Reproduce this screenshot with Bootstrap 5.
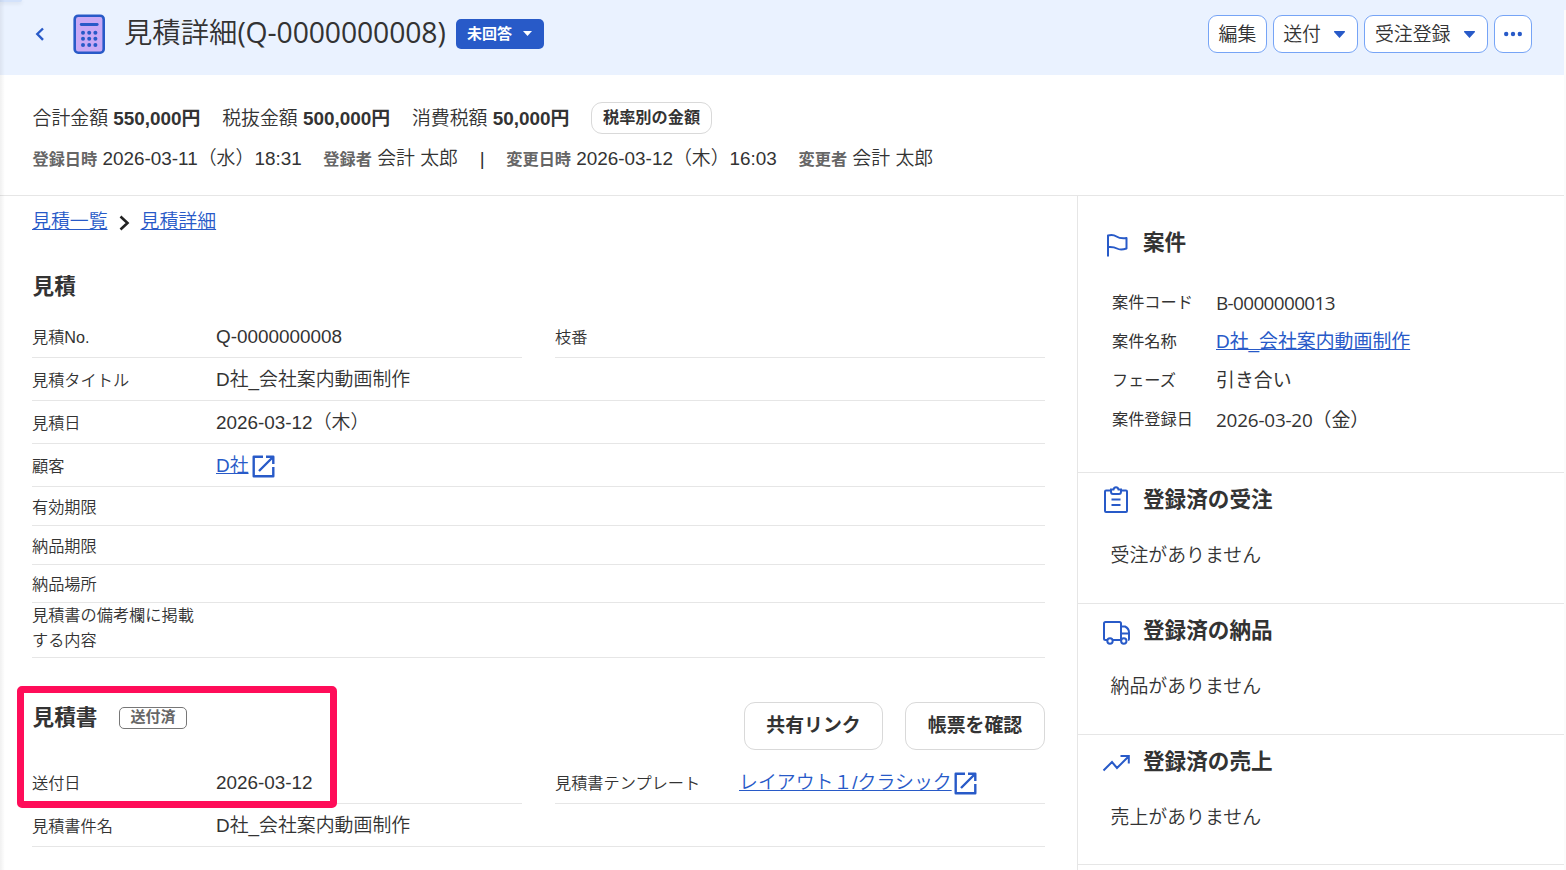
<!DOCTYPE html>
<html lang="ja">
<head>
<meta charset="utf-8">
<meta name="viewport" content="width=device-width, initial-scale=1">
<title>見積詳細</title>
<link href="https://cdn.jsdelivr.net/npm/bootstrap@5.3.0/dist/css/bootstrap.min.css" rel="stylesheet">
<style>
:root{--blue:#285ac8;--line:#e6e6e6}
body{font-family:"Liberation Sans","Noto Sans CJK JP",sans-serif;font-size:18.9px;line-height:28px;color:#333;font-weight:350;height:870px;overflow:hidden;background:linear-gradient(#eaf2ff 10px,#fbfbfb 10px)}
b{font-weight:700}
svg{display:block;flex:none}
.page{width:1564px;height:870px;background:#fff}
.page::before{content:"";position:absolute;left:0;top:0;width:5px;height:870px;background:linear-gradient(90deg,rgba(0,0,0,.06),transparent);z-index:3}
.tabend{position:absolute;left:0;top:0;width:22px;height:2px;background:#d3e2fb;box-shadow:0 1px 4px rgba(0,0,0,.12);border-radius:0 0 3px 0}
.topbar{height:75px;background:#eaf2ff;padding:0 32px 7px 34px}
.title{font-size:28.35px;line-height:40px;font-weight:350;margin:-3px 0 0 16px;width:332px}
.latin{font-family:"Open Sans","Noto Sans CJK JP",sans-serif;font-weight:400}
.title .latin{letter-spacing:-.12px}
.status{width:88px;height:30px;background:var(--blue);color:#fff;border-radius:5px;font-size:15px;font-weight:700;line-height:26px;padding:0 0 1px 10px;gap:11px}
.tool{height:38px;border:1px solid #76a4f6;border-radius:9px;background:#fff;color:#333;font-size:18.9px;font-weight:350;line-height:36px;padding:1px 9px 0 9.500px;gap:13px}
.tool.drop{padding-right:12.500px}
.summary{height:121px;padding:27px 32px 0 32.500px;border-bottom:1px solid var(--line)}
.sumrow{gap:21.700px;white-space:pre}
.sumrow.sums>span{padding-top:2px}
.meta{font-size:16.2px;color:#666}
.pillbtn{border:1px solid #d9d9d9;border-radius:11px;background:#fff;font-weight:700;color:#333;text-align:center}
.pillbtn.sm{font-size:16.2px;width:121px;height:32px;line-height:27px;padding:0 0 2px}
.pillbtn.lg{font-size:18.9px;height:48px;line-height:44px;padding:0}
a{color:var(--blue)}
a:hover{color:var(--blue)}
.left{width:1077px;padding:12px 32px 0}
h2.sec{font-size:21.6px;line-height:32px;font-weight:700;margin:0}
.left h2.sec{padding-left:.6px}
.field{border-bottom:1px solid var(--line);padding-top:2px}
.field .name{width:184px;font-size:16.2px;line-height:25px;flex:none}
.h43{height:43px}.h39{height:39px}.h38{height:38px}
.h55{height:55px;padding:0 0 5px}
.chip{width:68px;height:22px;border:1px solid #777;border-radius:5px;font-size:15px;line-height:18px;font-weight:700;color:#666;text-align:center}
.callout{position:absolute;left:17px;top:686px;width:320px;height:122px;border:7px solid #ff0d59;border-radius:5px;z-index:4}
.side{width:487px;height:680px;border-left:1px solid var(--line)}
.panel{border-bottom:1px solid var(--line);height:131px;padding:11px 24px 0 24px}
.panel h2.sec{margin-left:13px}
.panel p{margin:26px 0 0 8.500px}
.info{margin:23px 0 0 10px;font-weight:400}
.info .name{width:104px;font-size:16.2px;flex:none}
.info .val{padding-top:2px}
.info>div{height:39px}
.info .latin{letter-spacing:-.62px}
.info .date{letter-spacing:-.2px}
</style>
</head>
<body>
<div class="page position-relative">
<div class="tabend"></div>
<header class="topbar d-flex align-items-center">
  <svg width="12" height="16" viewBox="0 0 12 16" fill="none" stroke="#285ac8" stroke-width="2.4"><path d="M9 2.5 3.3 8 9 13.8"/></svg>
  <svg class="ms-4" width="38" height="42" viewBox="0 0 38 42"><rect x="4.7" y="2.7" width="29" height="37" rx="3.5" fill="#c9a9f5" stroke="#285ac8" stroke-width="2.600"/><path d="M11.2 11.500h16" stroke="#285ac8" stroke-width="2.800" stroke-linecap="round"/><g fill="#285ac8"><circle cx="13" cy="19.700" r="2"/><circle cx="19.200" cy="19.700" r="2"/><circle cx="25.400" cy="19.700" r="2"/><circle cx="13" cy="25.800" r="2"/><circle cx="19.200" cy="25.800" r="2"/><circle cx="25.400" cy="25.800" r="2"/><circle cx="13" cy="31.900" r="2"/><circle cx="19.200" cy="31.900" r="2"/><circle cx="25.400" cy="31.900" r="2"/></g></svg>
  <h1 class="title text-nowrap">見積詳細<span class="latin">(Q-0000000008)</span></h1>
  <button class="btn status d-flex align-items-center">未回答<svg width="9" height="5" viewBox="0 0 9 5"><path d="M0 0h9L4.500 5z" fill="#fff"/></svg></button>
  <div class="d-flex ms-auto" style="gap:6px">
    <button class="btn tool" style="width:59px">編集</button>
    <button class="btn tool drop d-flex align-items-center">送付<svg width="11" height="7" viewBox="0 0 11 7"><path d="M.5 0h10Q11.500.5 10.500 1.500L5.500 7 .5 1.500Q-.5.5.5 0z" fill="#285ac8"/></svg></button>
    <button class="btn tool drop d-flex align-items-center">受注登録<svg width="11" height="7" viewBox="0 0 11 7"><path d="M.5 0h10Q11.500.5 10.500 1.500L5.500 7 .5 1.500Q-.5.5.5 0z" fill="#285ac8"/></svg></button>
    <button class="btn tool d-flex align-items-center px-0 pt-0 justify-content-center" style="width:38px"><svg width="18" height="6" viewBox="0 0 18 6" fill="#285ac8"><circle cx="2.200" cy="3" r="2.200"/><circle cx="9" cy="3" r="2.200"/><circle cx="15.800" cy="3" r="2.200"/></svg></button>
  </div>
</header>
<section class="summary">
  <div class="sumrow sums d-flex align-items-center"><span>合計金額 <b>550,000円</b></span><span>税抜金額 <b>500,000円</b></span><span>消費税額 <b>50,000円</b></span><button class="pillbtn sm">税率別の金額</button></div>
  <div class="sumrow d-flex" style="margin-top:11px"><span><b class="meta">登録日時</b> 2026-03-11（水）18:31</span><span><b class="meta">登録者</b> 会計 太郎</span><span>|</span><span><b class="meta">変更日時</b> 2026-03-12（木）16:03</span><span><b class="meta">変更者</b> 会計 太郎</span></div>
</section>
<div class="d-flex">
<main class="left">
  <nav class="d-flex align-items-center"><a href="#">見積一覧</a><svg style="margin:2px 11px 0 11px" width="11" height="18" viewBox="0 0 11 18" fill="none" stroke="#222" stroke-width="2.600"><path d="m1.500 2.500 7 6.500-7 6.500"/></svg><a href="#">見積詳細</a></nav>
  <h2 class="sec" style="margin-top:35px">見積</h2>
  <div class="d-flex justify-content-between" style="margin-top:12px">
    <div class="field h43 d-flex align-items-center" style="width:490px"><span class="name">見積No.</span><span>Q-0000000008</span></div>
    <div class="field h43 d-flex align-items-center" style="width:490px"><span class="name">枝番</span></div>
  </div>
  <div class="field h43 d-flex align-items-center"><span class="name">見積タイトル</span><span>D社_会社案内動画制作</span></div>
  <div class="field h43 d-flex align-items-center"><span class="name">見積日</span><span>2026-03-12（木）</span></div>
  <div class="field h43 d-flex align-items-center"><span class="name">顧客</span><a href="#">D社</a><svg style="margin:1px 0 0 3px" width="23" height="23" viewBox="0 0 23 23" fill="none" stroke="#285ac8" stroke-width="2.400" stroke-linejoin="round"><path d="M11 1.700H1.700v19.600h19.600V12M14 1.700h7.300V9M21 2 7 16"/></svg></div>
  <div class="field h39 d-flex align-items-center"><span class="name">有効期限</span></div>
  <div class="field h39 d-flex align-items-center"><span class="name">納品期限</span></div>
  <div class="field h38 d-flex align-items-center"><span class="name">納品場所</span></div>
  <div class="field h55 d-flex align-items-center"><span class="name">見積書の備考欄に掲載<br>する内容</span></div>
  <div class="d-flex" style="margin-top:44px;height:59px">
    <h2 class="sec">見積書</h2><span class="chip" style="margin:5px 0 0 21.500px">送付済</span>
    <button class="pillbtn lg ms-auto" style="width:139px">共有リンク</button><button class="pillbtn lg" style="width:140px;margin-left:22px">帳票を確認</button>
  </div>
  <div class="d-flex justify-content-between">
    <div class="field h43 d-flex align-items-center" style="width:490px"><span class="name">送付日</span><span>2026-03-12</span></div>
    <div class="field h43 d-flex align-items-center" style="width:490px"><span class="name">見積書テンプレート</span><a href="#">レイアウト１/クラシック</a><svg style="margin:1px 0 0 2px" width="23" height="23" viewBox="0 0 23 23" fill="none" stroke="#285ac8" stroke-width="2.400" stroke-linejoin="round"><path d="M11 1.700H1.700v19.600h19.600V12M14 1.700h7.300V9M21 2 7 16"/></svg></div>
  </div>
  <div class="field h43 d-flex align-items-center"><span class="name">見積書件名</span><span>D社_会社案内動画制作</span></div>
</main>
<aside class="side">
  <section class="panel" style="height:277px;padding-top:31px">
    <div class="d-flex align-items-center"><svg class="mt-1" width="28" height="28" viewBox="0 0 28 28" fill="none" stroke="#285ac8" stroke-width="2" stroke-linejoin="round"><path d="M6 25.500V4.500Q11 3.200 14.500 5.500T24.500 7v10.500Q18.500 19.500 15 17.500T6 16"/></svg><h2 class="sec">案件</h2></div>
    <div class="info">
      <div class="d-flex align-items-center"><span class="name">案件コード</span><span class="latin val">B-0000000013</span></div>
      <div class="d-flex align-items-center"><span class="name">案件名称</span><a style="padding-top:2px" href="#">D社_会社案内動画制作</a></div>
      <div class="d-flex align-items-center"><span class="name">フェーズ</span><span style="padding-top:3px">引き合い</span></div>
      <div class="d-flex align-items-center"><span class="name">案件登録日</span><span style="padding-top:3px"><span class="latin date">2026-03-20</span>（金）</span></div>
    </div>
  </section>
  <section class="panel">
    <div class="d-flex align-items-center"><svg width="28" height="28" viewBox="0 0 28 28" fill="none" stroke="#285ac8" stroke-width="2"><path d="M9 4.500H4Q3 4.500 3 5.500V25q0 1 1 1h20q1 0 1-1V5.500q0-1-1-1h-5M9 3.500h2.500q.5-2.300 2.500-2.300t2.500 2.300H19v2Q19 8 17 8h-6Q9 8 9 5.500zM9.500 13.500h9M9.500 19h9"/></svg><h2 class="sec">登録済の受注</h2></div>
    <p>受注がありません</p>
  </section>
  <section class="panel">
    <div class="d-flex align-items-center"><svg class="mt-1" width="28" height="28" viewBox="0 0 28 28" fill="none" stroke="#285ac8" stroke-width="2"><path d="M5 21H3.500Q2 21 2 19.500v-15Q2 3 3.500 3h14Q19 3 19 4.500V21h-8M19 7.500h4q4 2 4 6V20q0 1-1 1M19 14.500h8"/><circle cx="8" cy="22" r="2.700" fill="#fff"/><circle cx="21.800" cy="22" r="2.700" fill="#fff"/></svg><h2 class="sec">登録済の納品</h2></div>
    <p>納品がありません</p>
  </section>
  <section class="panel" style="height:130px">
    <div class="d-flex align-items-center"><svg class="mt-1" width="28" height="28" viewBox="0 0 28 28" fill="none" stroke="#285ac8" stroke-width="2"><path d="M1.500 20.500 10 12l5 6L26.500 6.500M18.500 6h8.300V13.500"/></svg><h2 class="sec">登録済の売上</h2></div>
    <p>売上がありません</p>
  </section>
</aside>
</div>
<div class="callout"></div>
</div>
<script src="https://cdn.jsdelivr.net/npm/bootstrap@5.3.0/dist/js/bootstrap.bundle.min.js"></script>
</body>
</html>
